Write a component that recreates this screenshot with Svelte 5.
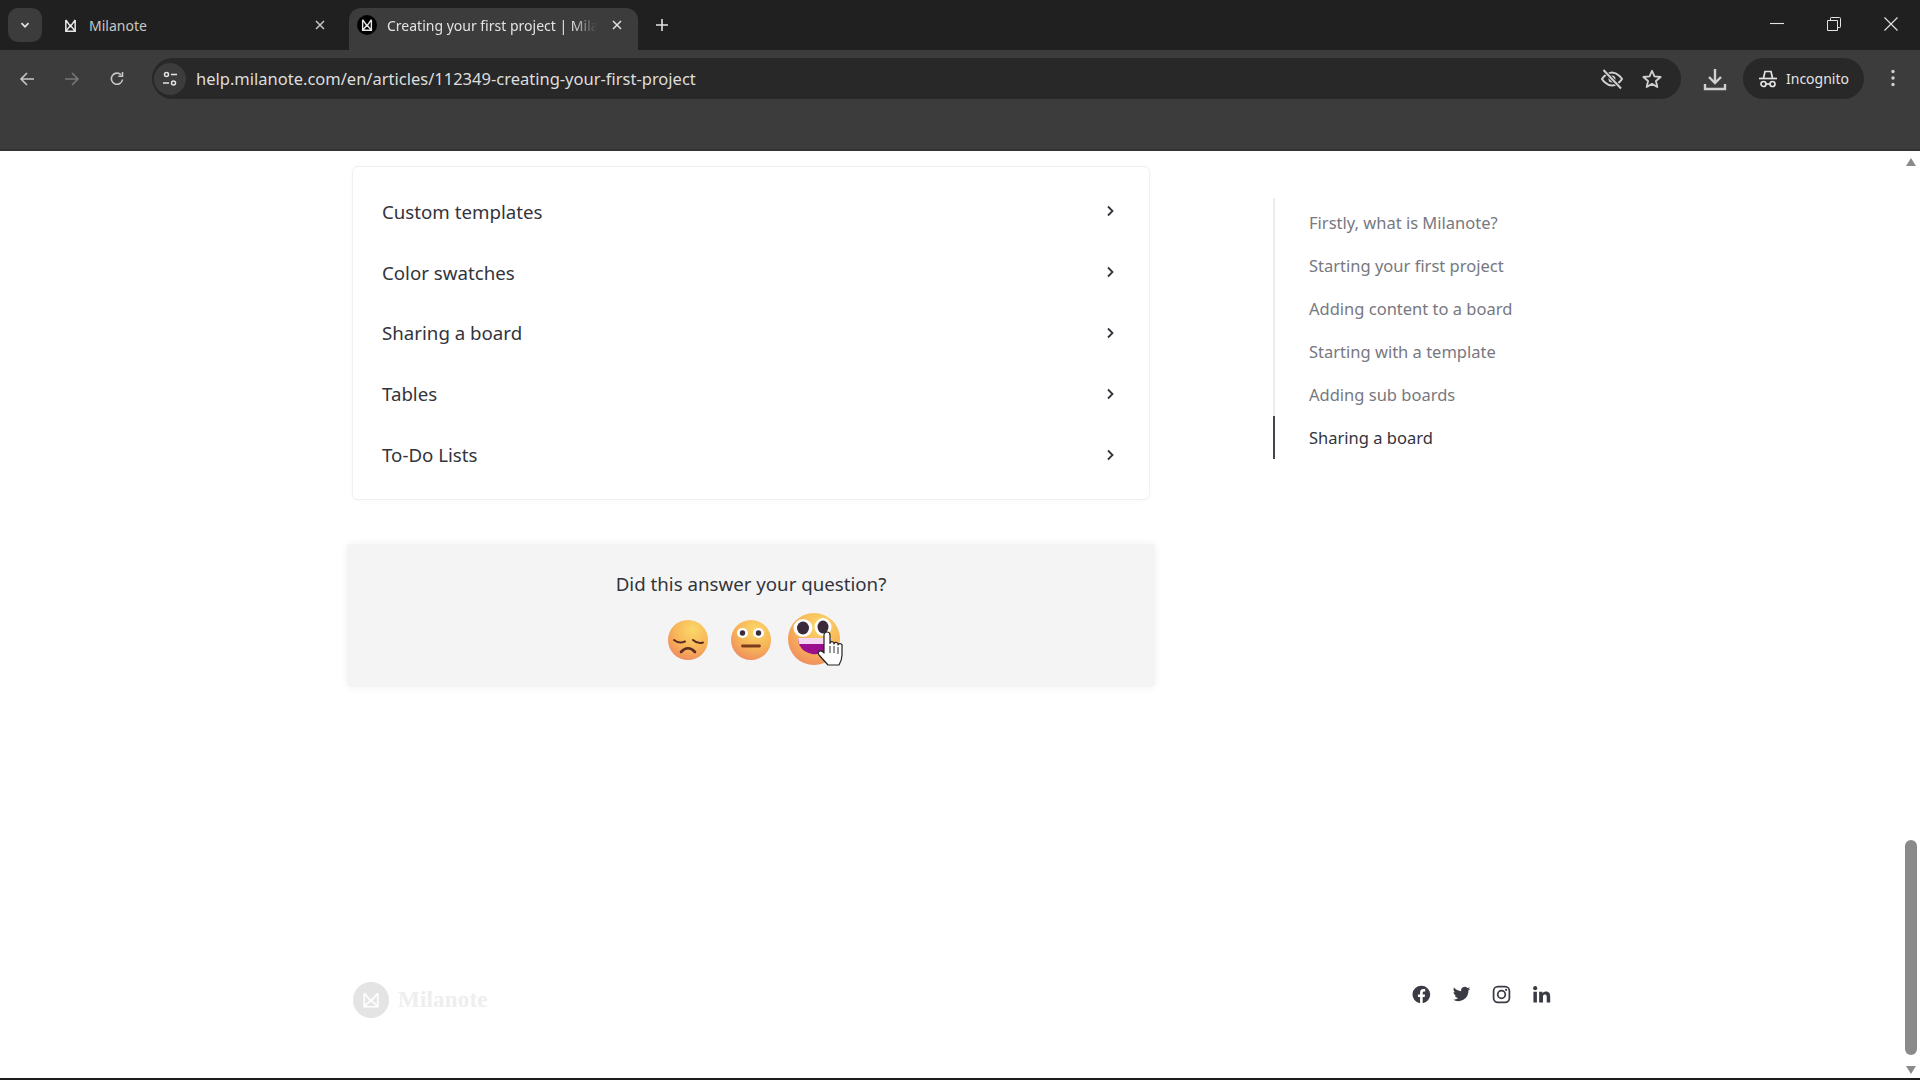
<script>
  const rows = ['Custom templates', 'Color swatches', 'Sharing a board', 'Tables', 'To-Do Lists'];
  const toc = ['Firstly, what is Milanote?', 'Starting your first project', 'Adding content to a board', 'Starting with a template', 'Adding sub boards', 'Sharing a board'];
</script>

{#snippet favicon()}
  <svg class="fav" viewBox="0 0 16 16"><path d="M3 2v12h10V2M3 2l5 7 5-7M3 14l5-6 5 6" fill="none" stroke="#e6e6e6" stroke-width="1.6"/></svg>
{/snippet}

<div class="window">
  <header class="tabstrip">
    <button class="tabsearch" aria-label="Search tabs">
      <svg viewBox="0 0 12 12" width="12" height="12"><path d="M2.5 4.2 6 7.8l3.5-3.6" fill="none" stroke="#e3e3e3" stroke-width="1.8"/></svg>
    </button>
    <div class="tab">
      {@render favicon()}
      <span class="title">Milanote</span>
      <svg class="x" viewBox="0 0 12 12"><path d="M2 2l8 8M10 2l-8 8" stroke="#c7c7c7" stroke-width="1.5"/></svg>
    </div>
    <div class="tab active">
      <span class="favwrap">{@render favicon()}</span>
      <span class="title">Creating your first project | Mila</span>
      <svg class="x" viewBox="0 0 12 12"><path d="M2 2l8 8M10 2l-8 8" stroke="#e3e3e3" stroke-width="1.5"/></svg>
    </div>
    <svg class="plus" viewBox="0 0 14 14"><path d="M7 1v12M1 7h12" stroke="#e3e3e3" stroke-width="1.6"/></svg>
    <div class="winbtns">
      <svg viewBox="0 0 14 14"><path d="M0 6.5h14" stroke="#e3e3e3" stroke-width="1.1"/></svg>
      <svg viewBox="0 0 14 14"><path d="M.5 3.5h10v10H.5zM3.5 3V1.2Q3.5.5 4.2.5h8.3q1 0 1 1v8.3q0 .7-.7.7H11" fill="none" stroke="#e3e3e3" stroke-width="1"/></svg>
      <svg viewBox="0 0 14 14"><path d="M.5.5l13 13M13.500.5l-13 13" stroke="#e3e3e3" stroke-width="1.1"/></svg>
    </div>
  </header>

  <div class="toolbar">
    <div class="nav">
      <svg viewBox="0 0 16 16"><path d="M15 8H2M8 2 2 8l6 6" fill="none" stroke="#c7c7c7" stroke-width="1.6"/></svg>
      <svg viewBox="0 0 16 16"><path d="M1 8h13M8 2l6 6-6 6" fill="none" stroke="#777" stroke-width="1.6"/></svg>
      <svg viewBox="0 0 16 16"><path d="M13.500 8.500A5.600 5.600 0 1 1 12 3.800M13.500 1v4.200H9.300" fill="none" stroke="#c7c7c7" stroke-width="1.6"/></svg>
    </div>
    <div class="omnibox">
      <span class="siteinfo">
        <svg viewBox="0 0 16 16" width="16" height="16"><g fill="none" stroke="#e3e3e3" stroke-width="1.5"><circle cx="4.500" cy="3.500" r="2"/><path d="M9 3.500h6M1 12h6"/><circle cx="11.500" cy="12" r="2"/></g></svg>
      </span>
      <span class="url">help.milanote.com/en/articles/112349-creating-your-first-project</span>
      <svg class="omni-ic" viewBox="0 0 24 24"><path d="M2 12s4-6.500 10-6.500S22 12 22 12s-4 6.500-10 6.500S2 12 2 12z" fill="none" stroke="#d0d0d0" stroke-width="2"/><circle cx="12" cy="12" r="3.500" fill="#d0d0d0"/><path d="M4 3.500 20.500 21" stroke="#292929" stroke-width="4"/><path d="M3.500 3 21 21.500" stroke="#d0d0d0" stroke-width="2"/></svg>
      <svg class="omni-ic star" viewBox="0 0 24 24"><path d="m12 3 2.700 6.200 6.700.6-5.100 4.400 1.500 6.600L12 17.300l-5.800 3.500 1.500-6.600-5.100-4.400 6.700-.6z" fill="none" stroke="#d0d0d0" stroke-width="2" stroke-linejoin="round"/></svg>
    </div>
    <svg class="dl" viewBox="0 0 24 24"><path d="M12 2v13M6 10l6 6 6-6M2 17v5h20v-5" fill="none" stroke="#d0d0d0" stroke-width="2.400"/></svg>
    <div class="incognito">
      <svg viewBox="0 0 20 20" width="20" height="20"><g fill="none" stroke="#e3e3e3" stroke-width="1.700"><path d="M5.500 9 7 2.500h6L14.500 9"/><path d="M1 9.500h18"/><circle cx="5.500" cy="15" r="2.500"/><circle cx="14.500" cy="15" r="2.500"/><path d="M8 15h4"/></g></svg>
      <span>Incognito</span>
    </div>
    <svg class="kebab" viewBox="0 0 4 18"><circle cx="2" cy="2.500" r="1.700"/><circle cx="2" cy="9" r="1.700"/><circle cx="2" cy="15.500" r="1.700"/></svg>
  </div>

  <div class="viewport">
    <main class="page">
      <div class="columns">
        <div class="article">
          <div class="card">
            {#each rows as row}
              <div class="row">
                <span>{row}</span>
                <svg viewBox="0 0 10 12" width="10" height="12"><path d="M3 1.500 7.500 6 3 10.500" fill="none" stroke="#33343b" stroke-width="1.800"/></svg>
              </div>
            {/each}
          </div>

          <div class="feedback">
            <div class="question">Did this answer your question?</div>
            <div class="emojis">
              <svg class="emoji" width="44" height="44" viewBox="0 0 44 44">
                <defs>
                  <radialGradient id="face" cx="0.620" cy="0.250" r="0.850">
                    <stop offset="0" stop-color="#fbd869"/><stop offset="0.550" stop-color="#f7b458"/><stop offset="1" stop-color="#ee8560"/>
                  </radialGradient>
                </defs>
                <circle cx="22" cy="22" r="20" fill="url(#face)"/>
                <path d="M8 22q5 4 11 1.500M27 22q5 4.500 10 2.500" fill="none" stroke="#5c2d24" stroke-width="2" stroke-linecap="round"/>
                <path d="M15 34q7-7.500 14 0" fill="none" stroke="#5c2d24" stroke-width="2.600" stroke-linecap="round"/>
              </svg>
              <svg class="emoji neutral" width="44" height="44" viewBox="0 0 44 44">
                <circle cx="22" cy="22" r="20" fill="url(#face)"/>
                <ellipse cx="13.500" cy="15" rx="5.500" ry="5" fill="#fff"/><ellipse cx="29.500" cy="15" rx="5.500" ry="5" fill="#fff"/>
                <circle cx="13.500" cy="15" r="2.700" fill="#3b2a3a"/><circle cx="29.500" cy="15" r="2.700" fill="#3b2a3a"/>
                <path d="M13.500 28h17" stroke="#7c3a20" stroke-width="2.800" stroke-linecap="round"/>
              </svg>
              <div class="happy">
                <svg width="54" height="54" viewBox="0 0 54 54">
                  <circle cx="27" cy="27" r="26" fill="url(#face)"/>
                  <ellipse cx="16" cy="16" rx="9.500" ry="9" fill="#fff"/><ellipse cx="36" cy="15" rx="8.500" ry="9" fill="#fff"/>
                  <ellipse cx="16" cy="16" rx="6" ry="6.500" fill="#3b2a3a"/><ellipse cx="36" cy="15" rx="5.500" ry="6.500" fill="#3b2a3a"/>
                  <path d="M11 26h33q-1 10-8 14-5 3-11 2-9-2-12-8-2-3-2-8z" fill="#9b0f8e"/>
                  <path d="M11 26h33l-1 6H12z" fill="#f3d6f1"/>
                </svg>
                <svg class="cursor" width="26" height="35" viewBox="0 0 26 35"><path d="M7 4a3 3 0 0 1 6 0v8.500a2 2 0 0 1 4 .5 2 2 0 0 1 4 1 2 2 0 0 1 4 1.500V24q0 5-3 10H11L2 24q-2-3 1-4 2-.5 4 2z" fill="#fff" stroke="#222" stroke-width="1.200" stroke-linejoin="round"/><path d="M13 15v7M17 15v7M21 16v7" stroke="#333" stroke-width="1"/></svg>
              </div>
            </div>
          </div>
        </div>

        <nav class="toc">
          {#each toc as item, i}
            <div class="tocitem" class:current={i === 5}>{item}</div>
          {/each}
        </nav>
      </div>

      <footer class="footer">
        <div class="brand">
          <span class="mark">
            <svg viewBox="0 0 16 16" width="18" height="18"><path d="M2 2v12h12V2M2 2l6 7 6-7M2 14l6-6 6 6" fill="none" stroke="#fff" stroke-width="1.500"/></svg>
          </span>
          <span class="brandname">Milanote</span>
        </div>
        <div class="social">
          <svg viewBox="0 0 24 24"><path d="M12 1a11 11 0 0 0-1.800 21.900V15H7.500v-3h2.700V9.500c0-2.800 1.600-4.300 4.100-4.300 1.200 0 2.400.2 2.400.2v2.700h-1.400c-1.300 0-1.800.8-1.800 1.700V12h3l-.5 3h-2.500v7.900A11 11 0 0 0 12 1z"/></svg>
          <svg viewBox="0 0 24 24"><path d="M23 4.600c-.8.400-1.700.6-2.600.7.900-.6 1.600-1.400 2-2.500-.9.500-1.900.9-2.900 1.100a4.500 4.500 0 0 0-7.800 4.100C8 7.800 4.700 6 2.500 3.300c-1.200 2-.6 4.700 1.400 6-.7 0-1.400-.2-2-.6 0 2.200 1.500 4.100 3.600 4.500-.7.200-1.400.2-2 .1.600 1.800 2.300 3.100 4.300 3.200A9.100 9.100 0 0 1 1 18.400a12.800 12.800 0 0 0 19.700-11.400c.9-.6 1.700-1.400 2.300-2.400z"/></svg>
          <svg viewBox="0 0 24 24"><rect x="2" y="2" width="20" height="20" rx="5.500" fill="none" stroke="#3a3b44" stroke-width="2.200"/><circle cx="12" cy="12" r="4.800" fill="none" stroke="#3a3b44" stroke-width="2.200"/><circle cx="17.800" cy="6.200" r="1.400"/></svg>
          <svg viewBox="0 0 24 24"><circle cx="4" cy="4" r="2.600"/><path d="M1.800 8.500h4.400V22H1.800zM9 8.500h4.200v1.900c.7-1.200 2.200-2.300 4.400-2.300 4.500 0 5.400 2.900 5.400 6.700V22h-4.400v-6.300c0-1.600 0-3.600-2.200-3.600s-2.500 1.700-2.500 3.500V22H9z"/></svg>
        </div>
      </footer>
    </main>

    <aside class="scrollbar">
      <svg viewBox="0 0 12 10" width="12" height="10"><path d="M6 1l5 8H1z" fill="#8a8a8a"/></svg>
      <div class="track"><div class="thumb"></div></div>
      <svg viewBox="0 0 12 10" width="12" height="10"><path d="M1 1h10L6 9z" fill="#8a8a8a"/></svg>
    </aside>
  </div>
  <div class="taskline"></div>
</div>

<style>
  :global(body) { margin: 0; background: #fff; }
  .window {
    width: 1920px; height: 1080px; overflow: hidden;
    display: flex; flex-direction: column;
    font-family: "Noto Sans", "Open Sans", sans-serif;
  }

  /* browser chrome */
  .tabstrip { height: 50px; background: #202020; display: flex; align-items: flex-start; position: relative; flex: none; }
  .tabsearch {
    width: 34px; height: 34px; margin: 8px 0 0 8px; padding: 0; border: 0; border-radius: 10px;
    background: #3c3c3c; display: flex; align-items: center; justify-content: center;
  }
  .tab { height: 42px; margin-top: 8px; padding-bottom: 8px; display: flex; align-items: center; color: #c7c7c7; font-size: 14px; flex: none; box-sizing: border-box; }
  .tab:not(.active) { padding-left: 13px; margin-left: 8px; width: 298px; }
  .tab:not(.active) .x { margin-right: 22px; }
  .tab.active {
    width: 289px; background: #3c3c3c; border-radius: 12px 12px 0 0; color: #e3e3e3;
    padding-left: 8px; margin-left: 1px;
  }
  .fav { width: 15px; height: 15px; flex: none; }
  .favwrap { width: 20px; height: 20px; border-radius: 50%; background: #000; display: flex; align-items: center; justify-content: center; flex: none; }
  .favwrap .fav { width: 14px; height: 14px; }
  .title { margin-left: 11px; flex: 1; min-width: 0; white-space: nowrap; }
  .tab.active .title {
    margin-left: 10px;
    -webkit-mask-image: linear-gradient(90deg, #000 88%, transparent 100%);
    mask-image: linear-gradient(90deg, #000 88%, transparent 100%);
  }
  .x { width: 12px; height: 12px; flex: none; margin: 0 15px 0 14px; }
  .plus { width: 14px; height: 14px; margin: 18px 0 0 17px; flex: none; }
  .winbtns { margin-left: auto; display: flex; gap: 43px; padding: 17px 22px 0 0; }
  .winbtns svg { width: 14px; height: 14px; }

  .toolbar {
    height: 101px; background: #3c3c3c; flex: none; box-sizing: border-box;
    display: flex; align-items: flex-start; padding-top: 8px;
    border-bottom: 2px solid #343434;
  }
  .nav { display: flex; gap: 29px; padding: 13px 0 0 19px; width: 152px; box-sizing: border-box; flex: none; }
  .nav svg { width: 16px; height: 16px; flex: none; }
  .omnibox {
    width: 1529px; height: 41px; background: #282828; border-radius: 21px;
    display: flex; align-items: center; box-sizing: border-box; padding: 0 18px 0 0; flex: none;
  }
  .siteinfo { width: 32px; height: 32px; border-radius: 50%; background: #3c3c3c; display: flex; align-items: center; justify-content: center; flex: none; margin-left: 2px; }
  .url { color: #dedede; font-size: 16.5px; margin-left: 10px; flex: 1; white-space: nowrap; }
  .omni-ic { width: 24px; height: 24px; flex: none; }
  .omni-ic.star { width: 22px; height: 22px; margin-left: 17px; }
  .dl { width: 24px; height: 24px; margin: 9px 0 0 22px; flex: none; }
  .incognito {
    width: 121px; height: 41px; margin-left: 16px; border-radius: 21px; background: #282828;
    color: #e3e3e3; font-size: 14px; display: flex; align-items: center; gap: 8px; padding-left: 15px; box-sizing: border-box; flex: none;
  }
  .kebab { width: 4px; height: 18px; margin: 11px 0 0 27px; fill: #d0d0d0; flex: none; }

  /* page */
  .viewport { flex: 1; min-height: 0; display: flex; background: #fff; }
  .page { flex: 1; min-width: 0; display: flex; flex-direction: column; }
  .columns { display: flex; align-items: flex-start; padding: 15px 0 0 347px; }
  .article { width: 808px; flex: none; }
  .card {
    margin: 0 5px; border: 1px solid #f0f0f1; border-radius: 6px; background: #fff;
    padding: 14px 0 18px; height: 334px; box-sizing: border-box;
    box-shadow: 0 1px 4px rgba(0,0,0,.03);
  }
  .row {
    height: 60.800px; display: flex; align-items: center; justify-content: space-between;
    padding: 0 34.500px 0 29px; font-size: 18.700px; color: #33343b;
  }
  .feedback {
    margin-top: 44px; height: 143px; background: #f4f4f5; border-radius: 4px;
    box-shadow: 0 0 8px rgba(0,0,0,.06);
    display: flex; flex-direction: column; align-items: center; box-sizing: border-box; padding-top: 26px;
  }
  .question { font-size: 18.700px; color: #33343b; line-height: 28px; }
  .emojis { display: flex; align-items: center; margin-top: 14px; height: 56px; padding-left: 5px; }
  .emoji { flex: none; }
  .neutral { margin: 0 14.500px 0 18.500px; }
  .happy { position: relative; width: 54px; height: 54px; margin-top: -2px; }
  .happy svg { display: block; }
  .cursor { position: absolute; left: 30px; top: 19px; }

  .toc {
    margin: 32px 0 0 118px; padding-top: 3px; border-left: 2px solid #ececec; display: flex; flex-direction: column;
    height: 258px;
  }
  .tocitem {
    height: 43px; line-height: 43px; font-size: 16.500px; color: #77787f; padding-left: 34px;
    margin-left: -2px; border-left: 2px solid transparent; white-space: nowrap;
  }
  .tocitem.current { color: #33343b; border-left-color: #44454c; }

  .footer { margin-top: auto; display: flex; align-items: flex-start; justify-content: space-between; padding: 0 350px 45px 353px; height: 108px; box-sizing: border-box; }
  .brand { display: flex; align-items: center; gap: 9px; margin-top: 12px; }
  .mark { width: 36px; height: 36px; border-radius: 50%; background: #e4e4e4; display: flex; align-items: center; justify-content: center; }
  .brandname { font-family: "Liberation Serif", serif; font-weight: 700; font-size: 23px; color: #eeeeee; letter-spacing: .2px; }
  .social { display: flex; gap: 21px; align-items: center; margin-top: 15px; }
  .social svg { width: 19px; height: 19px; fill: #3a3b44; flex: none; }

  .scrollbar { width: 19px; flex: none; display: flex; flex-direction: column; align-items: center; padding: 6px 0 3px; box-sizing: border-box; background: #fff; }
  .scrollbar svg { flex: none; }
  .track { flex: 1; width: 12px; position: relative; }
  .thumb { position: absolute; left: 0; right: 0; bottom: 10px; height: 215px; background: #8a8a8a; border-radius: 6px; }
  .taskline { height: 2px; background: #1c1c1c; flex: none; }
</style>
